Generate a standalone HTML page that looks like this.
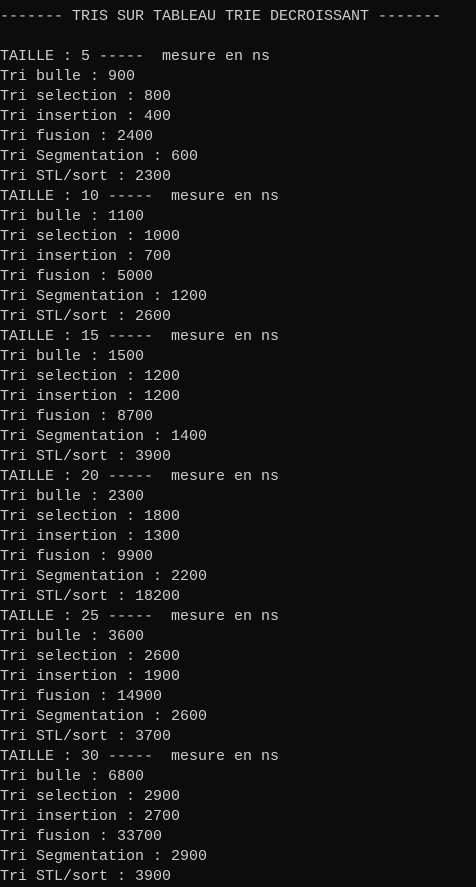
<!DOCTYPE html>
<html><head><style>
html,body{margin:0;padding:0;background:#0c0c0c;width:476px;height:887px;overflow:hidden}
pre{margin:0;padding:7px 0 0 0;font-family:"Liberation Mono",monospace;font-size:15px;line-height:20px;color:#cccccc;white-space:pre}
</style></head><body><pre>------- TRIS SUR TABLEAU TRIE DECROISSANT -------

TAILLE : 5 -----  mesure en ns
Tri bulle : 900
Tri selection : 800
Tri insertion : 400
Tri fusion : 2400
Tri Segmentation : 600
Tri STL/sort : 2300
TAILLE : 10 -----  mesure en ns
Tri bulle : 1100
Tri selection : 1000
Tri insertion : 700
Tri fusion : 5000
Tri Segmentation : 1200
Tri STL/sort : 2600
TAILLE : 15 -----  mesure en ns
Tri bulle : 1500
Tri selection : 1200
Tri insertion : 1200
Tri fusion : 8700
Tri Segmentation : 1400
Tri STL/sort : 3900
TAILLE : 20 -----  mesure en ns
Tri bulle : 2300
Tri selection : 1800
Tri insertion : 1300
Tri fusion : 9900
Tri Segmentation : 2200
Tri STL/sort : 18200
TAILLE : 25 -----  mesure en ns
Tri bulle : 3600
Tri selection : 2600
Tri insertion : 1900
Tri fusion : 14900
Tri Segmentation : 2600
Tri STL/sort : 3700
TAILLE : 30 -----  mesure en ns
Tri bulle : 6800
Tri selection : 2900
Tri insertion : 2700
Tri fusion : 33700
Tri Segmentation : 2900
Tri STL/sort : 3900</pre></body></html>
